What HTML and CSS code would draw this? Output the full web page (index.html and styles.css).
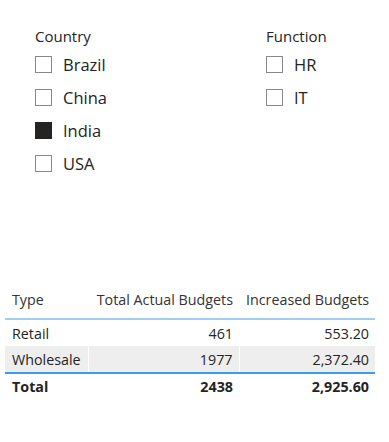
FILE: index.html
```html
<!DOCTYPE html>
<html>
<head>
<meta charset="utf-8">
<link rel="stylesheet" href="styles.css">
</head>
<body>
<div class="slicers">
  <div class="slicer country">
    <div class="slicer-title">Country</div>
    <div class="item"><span class="box"></span><span class="label">Brazil</span></div>
    <div class="item"><span class="box"></span><span class="label">China</span></div>
    <div class="item"><span class="box checked"></span><span class="label">India</span></div>
    <div class="item"><span class="box"></span><span class="label">USA</span></div>
  </div>
  <div class="slicer function">
    <div class="slicer-title">Function</div>
    <div class="item"><span class="box"></span><span class="label">HR</span></div>
    <div class="item"><span class="box"></span><span class="label">IT</span></div>
  </div>
</div>
<table class="grid">
  <colgroup><col class="c1"><col class="c2"><col class="c3"></colgroup>
  <thead>
    <tr><th class="left">Type</th><th>Total Actual Budgets</th><th>Increased Budgets</th></tr>
  </thead>
  <tbody>
    <tr class="odd"><td class="left">Retail</td><td>461</td><td>553.20</td></tr>
    <tr class="even"><td class="left">Wholesale</td><td>1977</td><td>2,372.40</td></tr>
  </tbody>
  <tfoot>
    <tr><td class="left">Total</td><td>2438</td><td>2,925.60</td></tr>
  </tfoot>
</table>
</body>
</html>
```

FILE: styles.css
```css
html, body {
  margin: 0;
  padding: 0;
  background: #ffffff;
}
body {
  font-family: "Open Sans", "Noto Sans", sans-serif;
  color: #252423;
  width: 389px;
  height: 442px;
  overflow: hidden;
}
.slicers {
  display: flex;
  padding: 26px 0 0 35px;
  height: 259px;
  box-sizing: border-box;
}
.slicer.country {
  width: 231px;
}
.slicer-title {
  font-size: 15px;
  line-height: 20px;
  color: #252423;
  margin-bottom: 9px;
}
.item {
  display: flex;
  align-items: center;
  height: 18px;
  margin-bottom: 15.3px;
}
.box {
  width: 17px;
  height: 17px;
  box-sizing: border-box;
  border: 1px solid #8a8886;
  background: #fff;
  flex: none;
}
.box.checked {
  background: #252423;
  border-color: #252423;
}
.label {
  font-size: 16.5px;
  line-height: 20px;
  margin-left: 11px;
  padding-top: 1px;
  color: #252423;
}
.grid {
  margin-left: 5px;
  margin-top: 26px;
  width: 370px;
  border-collapse: collapse;
  table-layout: fixed;
  font-size: 14.3px;
}
.c1 { width: 83px; }
.c2 { width: 151px; }
.c3 { width: 136px; }
.grid th, .grid td {
  text-align: right;
  padding: 0 6px 0 7px;
  white-space: nowrap;
  line-height: 18px;
}
.grid th.left, .grid td.left {
  text-align: left;
}
.grid th {
  font-weight: normal;
  color: #333333;
  height: 34px;
  vertical-align: bottom;
  padding-bottom: 9px;
  box-sizing: border-box;
  border-bottom: 2px solid #9fcdf3;
}
.grid td {
  height: 24px;
  padding-top: 2px;
  vertical-align: middle;
}
.grid tr.even td {
  background: #eeeeee;
  border-left: 1px solid #ffffff;
}
.grid tr.even td.left {
  border-left: none;
}
.grid tfoot td {
  font-weight: bold;
  border-top: 2px solid #3d9bec;
  height: 22px;
}
```
